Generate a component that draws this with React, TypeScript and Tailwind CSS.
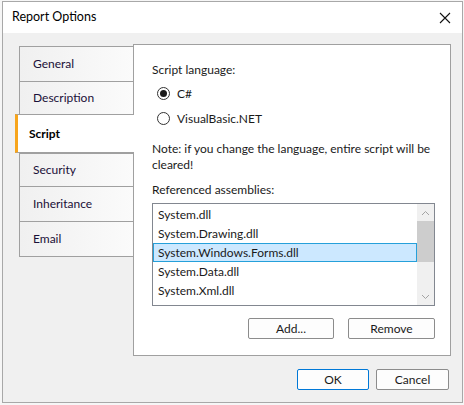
import React from 'react';

const tabs = [
  { name: 'General', h: 'h-[35px]' },
  { name: 'Description', h: 'h-[33px]' },
  { name: 'Script', h: 'h-[39px]', active: true },
  { name: 'Security', h: 'h-[33px]' },
  { name: 'Inheritance', h: 'h-[35px]' },
  { name: 'Email', h: 'h-[36px]', last: true },
];

const assemblies = ['System.dll', 'System.Drawing.dll', 'System.Windows.Forms.dll', 'System.Data.dll', 'System.Xml.dll'];

const Radio: React.FC<{ checked?: boolean; label: string }> = ({ checked, label }) => (
  <div className="flex items-center h-[25px] pl-[5px]">
    <span className="w-[13px] h-[13px] rounded-full border border-[#333] bg-white flex items-center justify-center">
      {checked && <span className="w-[7px] h-[7px] rounded-full bg-[#1a1a1a]"></span>}
    </span>
    <span className="ml-[7px]">{label}</span>
  </div>
);

export default function App() {
  return (
    <div
      className="w-[464px] h-[405px] bg-[#f6f6f6] pl-[2px] pt-[1px] text-[12px] text-[#1a1a1a] overflow-hidden"
      style={{ fontFamily: 'Lato, "Noto Sans", sans-serif' }}
    >
      <div className="w-[461px] h-[402px] border border-[#a8a8a8] bg-[#f0f0f0] flex flex-col">
        {/* title bar */}
        <div className="h-[31px] bg-white flex items-center justify-between pl-[9px] pr-[11px]">
          <span className="text-black text-[12.5px]">Report Options</span>
          <svg width="12" height="12" viewBox="0 0 12 12" className="mt-[1px]">
            <path d="M1 1 L11 11 M11 1 L1 11" stroke="#111" strokeWidth="1.1" fill="none" />
          </svg>
        </div>

        {/* body */}
        <div className="flex-1 flex flex-col pl-[12px] pt-[11px] pr-[11px]">
          <div className="flex">
            <div className="w-[119px] mt-[2px] -mr-px z-10 flex flex-col">
              {tabs.map((t) =>
                t.active ? (
                  <div
                    key={t.name}
                    className={`${t.h} bg-white border-l-[3px] border-l-[#f7a51c] border-y border-y-[#a0a0a0] pl-[11px] flex items-center font-bold text-black`}
                  >
                    {t.name}
                  </div>
                ) : (
                  <div
                    key={t.name}
                    className={`${t.h} ml-[4px] border-x border-t border-[#a0a0a0] ${t.last ? 'border-b' : ''} bg-gradient-to-r from-[#f0f0f0] to-[#fbfbfb] pl-[13px] flex items-center text-[#1a1038]`}
                  >
                    {t.name}
                  </div>
                )
              )}
            </div>

            <div className="w-[318px] h-[312px] border border-[#a0a0a0] bg-white pl-[18px] pr-[16px] pt-[17px] flex flex-col">
              <div className="leading-[16px]">Script language:</div>
              <div className="mt-[3px]">
                <Radio checked label="C#" />
                <Radio label="VisualBasic.NET" />
              </div>
              <div className="mt-[10px] leading-[16px]">
                Note: if you change the language, entire script will be cleared!
              </div>
              <div className="mt-[9px] leading-[16px]">Referenced assemblies:</div>
              <div className="mt-[5px] w-[283px] h-[103px] border border-[#828790] flex">
                <div className="flex-1 pt-[1px]">
                  {assemblies.map((a, i) => (
                    <div
                      key={a}
                      className={`h-[19px] flex items-center pl-[4px] ${
                        i === 2 ? 'bg-[#cce8ff] border border-[#26a0da]' : 'border border-transparent'
                      }`}
                    >
                      {a}
                    </div>
                  ))}
                </div>
                <div className="w-[17px] bg-[#f0f0f0] flex flex-col items-center">
                  <div className="h-[17px] flex items-center justify-center">
                    <svg width="9" height="6" viewBox="0 0 9 6">
                      <path d="M1 5 L4.5 1.5 L8 5" stroke="#a3a3a3" strokeWidth="1" fill="none" />
                    </svg>
                  </div>
                  <div className="w-full h-[41px] bg-[#cdcdcd]"></div>
                  <div className="flex-1"></div>
                  <div className="h-[17px] flex items-center justify-center">
                    <svg width="9" height="6" viewBox="0 0 9 6">
                      <path d="M1 1 L4.5 4.5 L8 1" stroke="#a3a3a3" strokeWidth="1" fill="none" />
                    </svg>
                  </div>
                </div>
              </div>
              <div className="mt-[12px] flex justify-between w-[283px] pl-[96px]">
                <button className="w-[86px] h-[21px] border border-[#8c8c8c] rounded-[2px] bg-[#fdfdfd]">
                  Add...
                </button>
                <button className="w-[87px] h-[21px] border border-[#8c8c8c] rounded-[2px] bg-[#fdfdfd]">
                  Remove
                </button>
              </div>
            </div>
          </div>

          <div className="mt-[13px] flex justify-end gap-[7px] pr-[2px]">
            <button className="w-[72px] h-[21px] border border-[#0078d7] rounded-[2px] bg-[#fdfdfd]">
              OK
            </button>
            <button className="w-[73px] h-[21px] border border-[#8c8c8c] rounded-[2px] bg-[#fdfdfd]">
              Cancel
            </button>
          </div>
        </div>
      </div>
    </div>
  );
}
